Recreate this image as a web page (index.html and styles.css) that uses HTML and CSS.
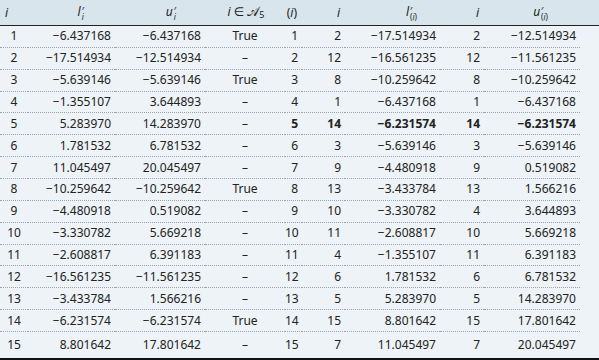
FILE: index.html
```html
<!DOCTYPE html>
<html>
<head>
<meta charset="utf-8">
<link rel="stylesheet" href="styles.css">
</head>
<body>
<div class="wrap">
<table class="tbl">
<colgroup>
<col class="w1"><col class="w2"><col class="w3"><col class="w4"><col class="w5"><col class="w6"><col class="w7"><col class="w8"><col class="w9"><col class="w10">
</colgroup>
<thead>
<tr>
<th class="h1"><i>i</i></th>
<th class="h2"><i>l</i><span class="ss"><span class="pr">′</span><span class="sb"><i>i</i></span></span></th>
<th class="h3"><i>u</i><span class="ss"><span class="pr">′</span><span class="sb"><i>i</i></span></span></th>
<th class="h4"><i>i</i> ∈ <span class="cal">𝒜</span><span class="sub5">5</span></th>
<th class="h5">(<i>i</i>)</th>
<th class="h6"><i>i</i></th>
<th class="h7"><i>l</i><span class="ss"><span class="pr">′</span><span class="sb">(<i>i</i>)</span></span></th>
<th class="h8"><i>i</i></th>
<th class="h9"><i>u</i><span class="ss"><span class="pr">′</span><span class="sb">(<i>i</i>)</span></span></th>
<th class="h10"></th>
</tr>
</thead>
<tbody>
<tr><td class="c1">1</td><td class="n">−6.437168</td><td class="n">−6.437168</td><td class="c4">True</td><td class="n">1</td><td class="n">2</td><td class="n">−17.514934</td><td class="n">2</td><td class="n">−12.514934</td><td class="f"></td></tr>
<tr><td class="c1">2</td><td class="n">−17.514934</td><td class="n">−12.514934</td><td class="c4">–</td><td class="n">2</td><td class="n">12</td><td class="n">−16.561235</td><td class="n">12</td><td class="n">−11.561235</td><td class="f"></td></tr>
<tr><td class="c1">3</td><td class="n">−5.639146</td><td class="n">−5.639146</td><td class="c4">True</td><td class="n">3</td><td class="n">8</td><td class="n">−10.259642</td><td class="n">8</td><td class="n">−10.259642</td><td class="f"></td></tr>
<tr><td class="c1">4</td><td class="n">−1.355107</td><td class="n">3.644893</td><td class="c4">–</td><td class="n">4</td><td class="n">1</td><td class="n">−6.437168</td><td class="n">1</td><td class="n">−6.437168</td><td class="f"></td></tr>
<tr><td class="c1">5</td><td class="n">5.283970</td><td class="n">14.283970</td><td class="c4">–</td><td class="n b">5</td><td class="n b">14</td><td class="n b">−6.231574</td><td class="n b">14</td><td class="n b">−6.231574</td><td class="f"></td></tr>
<tr><td class="c1">6</td><td class="n">1.781532</td><td class="n">6.781532</td><td class="c4">–</td><td class="n">6</td><td class="n">3</td><td class="n">−5.639146</td><td class="n">3</td><td class="n">−5.639146</td><td class="f"></td></tr>
<tr><td class="c1">7</td><td class="n">11.045497</td><td class="n">20.045497</td><td class="c4">–</td><td class="n">7</td><td class="n">9</td><td class="n">−4.480918</td><td class="n">9</td><td class="n">0.519082</td><td class="f"></td></tr>
<tr><td class="c1">8</td><td class="n">−10.259642</td><td class="n">−10.259642</td><td class="c4">True</td><td class="n">8</td><td class="n">13</td><td class="n">−3.433784</td><td class="n">13</td><td class="n">1.566216</td><td class="f"></td></tr>
<tr><td class="c1">9</td><td class="n">−4.480918</td><td class="n">0.519082</td><td class="c4">–</td><td class="n">9</td><td class="n">10</td><td class="n">−3.330782</td><td class="n">4</td><td class="n">3.644893</td><td class="f"></td></tr>
<tr><td class="c1">10</td><td class="n">−3.330782</td><td class="n">5.669218</td><td class="c4">–</td><td class="n">10</td><td class="n">11</td><td class="n">−2.608817</td><td class="n">10</td><td class="n">5.669218</td><td class="f"></td></tr>
<tr><td class="c1">11</td><td class="n">−2.608817</td><td class="n">6.391183</td><td class="c4">–</td><td class="n">11</td><td class="n">4</td><td class="n">−1.355107</td><td class="n">11</td><td class="n">6.391183</td><td class="f"></td></tr>
<tr><td class="c1">12</td><td class="n">−16.561235</td><td class="n">−11.561235</td><td class="c4">–</td><td class="n">12</td><td class="n">6</td><td class="n">1.781532</td><td class="n">6</td><td class="n">6.781532</td><td class="f"></td></tr>
<tr><td class="c1">13</td><td class="n">−3.433784</td><td class="n">1.566216</td><td class="c4">–</td><td class="n">13</td><td class="n">5</td><td class="n">5.283970</td><td class="n">5</td><td class="n">14.283970</td><td class="f"></td></tr>
<tr><td class="c1">14</td><td class="n">−6.231574</td><td class="n">−6.231574</td><td class="c4">True</td><td class="n">14</td><td class="n">15</td><td class="n">8.801642</td><td class="n">15</td><td class="n">17.801642</td><td class="f"></td></tr>
<tr class="last"><td class="c1">15</td><td class="n">8.801642</td><td class="n">17.801642</td><td class="c4">–</td><td class="n">15</td><td class="n">7</td><td class="n">11.045497</td><td class="n">7</td><td class="n">20.045497</td><td class="f"></td></tr>
</tbody>
</table>
</div>
</body>
</html>
```
FILE: styles.css
```css
html, body {
  margin: 0;
  padding: 0;
  background: #ffffff;
}
body {
  font-family: "Noto Sans", "DejaVu Sans", sans-serif;
  font-size: 12px;
  color: #222222;
}
.wrap {
  width: 599px;
}
.tbl {
  width: 599px;
  border-collapse: collapse;
  table-layout: fixed;
  background: #edf3f6;
  border-bottom: 2px solid #111111;
}
.w1 { width: 28px; }
.w2 { width: 87px; }
.w3 { width: 90px; }
.w4 { width: 80px; }
.w5 { width: 17px; }
.w6 { width: 43px; }
.w7 { width: 95px; }
.w8 { width: 44px; }
.w9 { width: 96px; }
.w10 { width: 19px; }

thead tr {
  background: #d8e5ec;
}
th {
  height: 25px;
  padding: 0 4px 0 0;
  font-weight: normal;
  text-align: right;
  border-bottom: 1px solid #222222;
  white-space: nowrap;
  line-height: 14px;
}
th.h1 { text-align: left; padding-left: 5px; }
th.h2 { padding-right: 31px; }
th.h3 { padding-right: 29px; }
th.h4 { text-align: center; padding: 0 0 0 2px; }
th.h5 { padding-right: 5px; }
th.h6 { padding-right: 5px; }
th.h7 { padding-right: 23px; }
th.h8 { padding-right: 5px; }
th.h9 { padding-right: 32px; }
th.h10 { padding: 0; }

.ss {
  display: inline-block;
  vertical-align: -4px;
  line-height: 1;
  margin-left: 1px;
  text-align: left;
}
.pr {
  display: block;
  font-size: 10px;
  height: 6px;
  line-height: 10px;
}
.sb {
  display: block;
  font-size: 8px;
  line-height: 9px;
}
.cal {
  font-size: 13px;
}
.sub5 {
  font-size: 9px;
  vertical-align: -2px;
}

td {
  height: 20.86px;
  padding: 0 4px 0 0;
  border-bottom: 1px dotted #9aa3a8;
  white-space: nowrap;
  line-height: 14px;
}
td.c1 { text-align: center; padding: 0; }
td.n { text-align: right; }
td.c4 { text-align: center; padding: 0; }
td.b { font-weight: bold; }
td.f { border-bottom: none; padding: 0; }
tr.last td { border-bottom: none; height: 25px; padding-bottom: 1px; }
```
